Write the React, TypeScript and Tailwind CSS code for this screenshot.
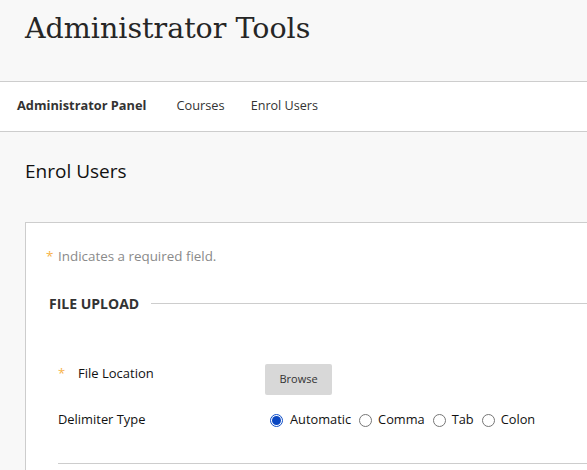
const sans = { fontFamily: '"Open Sans", sans-serif' };

function Radio({ label, checked }: { label: string; checked?: boolean }) {
  return (
    <label className="flex items-start">
      {checked ? (
        <span className="mr-[7px] mt-[4px] flex h-[13px] w-[13px] items-center justify-center rounded-full border border-[#0f4fc9] bg-white">
          <span className="h-[9px] w-[9px] rounded-full bg-[#0a47c2]" />
        </span>
      ) : (
        <span className="mr-[6px] mt-[4px] h-[13px] w-[13px] rounded-full border border-[#767676] bg-white" />
      )}
      <span className="text-[12.8px] leading-[18px] text-[#111]">{label}</span>
    </label>
  );
}

export default function App() {
  return (
    <div style={sans} className="h-[470px] w-[587px] overflow-hidden bg-[#f8f8f8] text-[#262626]">
      {/* Page title */}
      <div className="h-[82px] border-b border-[#cdcdcd] pl-[25px] pt-[9px]">
        <h1 className="font-['DejaVu_Serif',serif] text-[28.5px] leading-[40px] text-[#262626]">Administrator Tools</h1>
      </div>

      {/* Breadcrumb nav */}
      <nav className="flex h-[50px] items-baseline border-b border-[#cdcdcd] bg-white pl-[17px] pt-[14px] text-[12.8px] leading-[18px] text-[#333]">
        <span className="font-bold">Administrator Panel</span>
        <span className="ml-[30px]">Courses</span>
        <span className="ml-[26px] text-[12.6px]">Enrol Users</span>
      </nav>

      <div className="pl-[25px]">
        <h2 className="mt-[25px] text-[19px] leading-[28px] text-[#111]">Enrol Users</h2>

        <div className="mt-[37px] h-[400px] w-[600px] border border-[#cdcdcd] bg-white">
          <p className="mt-[24px] flex pl-[20px] text-[13.4px] leading-[18px] text-[#8a8a8a]">
            <span className="w-[8px] text-[#f7b34a]">*</span>
            <span className="ml-[4px]">Indicates a required field.</span>
          </p>

          <div className="mt-[29px] flex items-center pl-[23px]">
            <h3 className="text-[14px] font-bold leading-[20px] text-[#333]">FILE UPLOAD</h3>
            <div className="mb-[2px] ml-[12px] h-px flex-1 bg-[#cdcdcd]" />
          </div>

          <div className="mt-[50px] flex pl-[32px]">
            <div className="flex w-[207px] text-[13px] leading-[18px] text-[#111]">
              <span className="w-[20px] text-[#f7b34a]">*</span>
              <span>File Location</span>
            </div>
            <button className="h-[31px] w-[67px] rounded-[2px] bg-[#d8d8d8] text-[11px] text-[#333]">Browse</button>
          </div>

          <div className="mt-[15px] flex pl-[32px]">
            <div className="w-[212px] text-[12.9px] leading-[18px] text-[#111]">Delimiter Type</div>
            <div className="flex gap-[8px]">
              <Radio label="Automatic" checked />
              <Radio label="Comma" />
              <Radio label="Tab" />
              <Radio label="Colon" />
            </div>
          </div>

          <div className="ml-[32px] mt-[35px] h-px bg-[#cdcdcd]" />
        </div>
      </div>
    </div>
  );
}
